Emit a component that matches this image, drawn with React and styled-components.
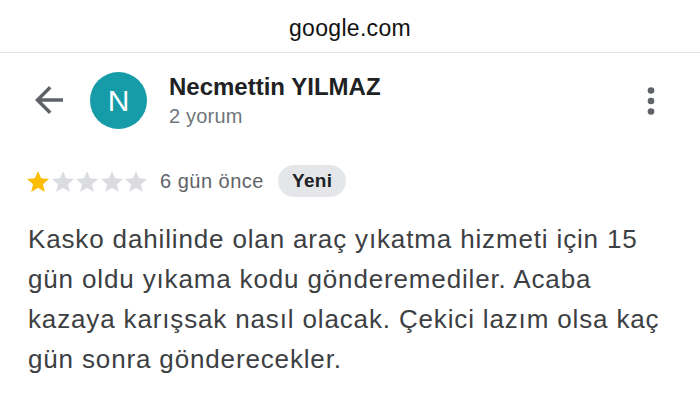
import React from 'react';
import styled, { createGlobalStyle } from 'styled-components';

const GlobalStyle = createGlobalStyle`
  html, body {
    margin: 0;
    padding: 0;
    background: #ffffff;
  }
  body {
    font-family: "Liberation Sans", Arial, sans-serif;
    -webkit-font-smoothing: antialiased;
  }
`;

const Page = styled.div`
  width: 700px;
  height: 410px;
  overflow: hidden;
  background: #ffffff;
`;

const UrlBar = styled.div`
  box-sizing: border-box;
  height: 53px;
  padding-top: 17px;
  border-bottom: 1px solid #e2e2e2;
  text-align: center;
  font-size: 23px;
  line-height: 23px;
  letter-spacing: 0.3px;
  color: #111111;
`;

const AuthorRow = styled.div`
  display: flex;
  align-items: flex-start;
  padding: 19px 28px 0 28px;
`;

const IconButton = styled.div`
  display: flex;
  margin-top: ${props => props.offset || 0}px;
  margin-left: ${props => props.pushRight ? 'auto' : '0'};
  color: #5f6368;
`;

const Avatar = styled.div`
  width: 57px;
  height: 57px;
  border-radius: 50%;
  margin-left: 20px;
  background: #169ca8;
  color: #ffffff;
  display: flex;
  align-items: center;
  justify-content: center;
  font-size: 30px;
  flex-shrink: 0;
`;

const AuthorInfo = styled.div`
  display: flex;
  flex-direction: column;
  margin-left: 22px;
  padding-top: 1px;
`;

const AuthorName = styled.div`
  font-size: 24px;
  line-height: 28px;
  font-weight: 700;
  color: #202124;
`;

const ReviewCount = styled.div`
  margin-top: 3px;
  font-size: 20px;
  line-height: 24px;
  letter-spacing: 0.2px;
  color: #70757a;
`;

const RatingRow = styled.div`
  display: flex;
  align-items: center;
  height: 32px;
  margin-top: 36px;
  padding-left: 27px;
`;

const Stars = styled.div`
  display: flex;
  gap: 2.5px;
`;

const TimeAgo = styled.span`
  margin-left: 13px;
  font-size: 20px;
  letter-spacing: 0.5px;
  color: #5f6368;
`;

const Chip = styled.span`
  display: inline-flex;
  align-items: center;
  box-sizing: border-box;
  height: 32px;
  margin-left: 14px;
  padding: 0 14px;
  border-radius: 16px;
  background: #e4e6e9;
  font-size: 19px;
  font-weight: 700;
  letter-spacing: 0.3px;
  color: #202124;
`;

const ReviewText = styled.p`
  margin: 22px 0 0 0;
  padding: 0 28px;
  font-size: 26px;
  line-height: 40px;
  letter-spacing: 0.85px;
  color: #3c4043;
`;

const STAR = 'M12 2l2.81 6.63L22 9.24l-5.46 4.73L18.18 21 12 17.27 5.82 21l1.64-7.03L2 9.24l7.19-.61z';

const Star = ({ filled }) => (
  <svg width="22" height="21" viewBox="2 2 20 19">
    <path d={STAR} fill={filled ? '#fbbc04' : '#dadce0'} />
  </svg>
);

const BackArrow = () => (
  <svg width="42" height="42" viewBox="0 0 24 24" fill="currentColor">
    <path d="M20 11H7.83l5.59-5.59L12 4l-8 8 8 8 1.41-1.41L7.83 13H20v-2z" />
  </svg>
);

const MoreVert = () => (
  <svg width="42" height="42" viewBox="0 0 24 24" fill="currentColor">
    <circle cx="12" cy="6" r="1.9" />
    <circle cx="12" cy="12" r="1.9" />
    <circle cx="12" cy="18" r="1.9" />
  </svg>
);

const review = {
  author: 'Necmettin YILMAZ',
  initial: 'N',
  count: '2 yorum',
  rating: 1,
  when: '6 gün önce',
  text: 'Kasko dahilinde olan araç yıkatma hizmeti için 15 gün oldu yıkama kodu gönderemediler. Acaba kazaya karışsak nasıl olacak. Çekici lazım olsa kaç gün sonra gönderecekler.'
};

const App = () => {
  return (
    <Page>
      <GlobalStyle />
      <UrlBar>google.com</UrlBar>
      <AuthorRow>
        <IconButton offset={7}><BackArrow /></IconButton>
        <Avatar>{review.initial}</Avatar>
        <AuthorInfo>
          <AuthorName>{review.author}</AuthorName>
          <ReviewCount>{review.count}</ReviewCount>
        </AuthorInfo>
        <IconButton offset={8} pushRight><MoreVert /></IconButton>
      </AuthorRow>
      <RatingRow>
        <Stars>
          {[1, 2, 3, 4, 5].map(i => <Star key={i} filled={i <= review.rating} />)}
        </Stars>
        <TimeAgo>{review.when}</TimeAgo>
        <Chip>Yeni</Chip>
      </RatingRow>
      <ReviewText>{review.text}</ReviewText>
    </Page>
  );
};

export default App;
